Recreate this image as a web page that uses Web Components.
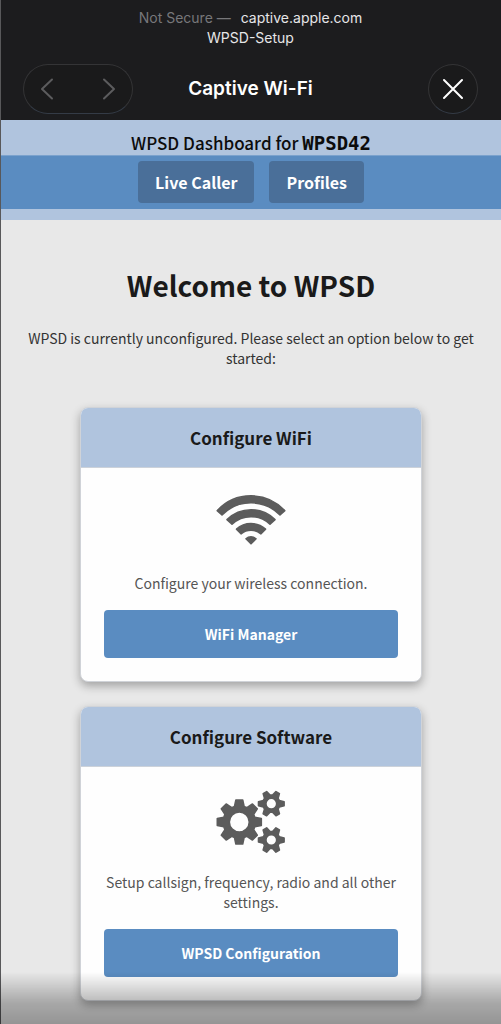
<!DOCTYPE html>
<html lang="en">
<head>
<meta charset="utf-8">
<meta name="viewport" content="width=device-width, initial-scale=1">
<title>Captive Wi-Fi</title>
<style>
    body {
        margin: 0;
        background: #e8e8e8;
        font-family: "Noto Sans CJK SC", "Noto Sans", sans-serif;
    }
</style>
</head>
<body>
<wpsd-app></wpsd-app>

<script>
// Outline of a cog with `teeth` teeth and a round hole in the middle
function gearPath(cx, cy, outer, inner, hole, teeth, tip, base) {
    const points = [];
    for (let i = 0; i < teeth; i++) {
        const angle = (i / teeth) * Math.PI * 2;
        [[inner, -base], [outer, -tip], [outer, tip], [inner, base]].forEach(([r, half]) => {
            const x = cx + r * Math.cos(angle) - half * Math.sin(angle);
            const y = cy + r * Math.sin(angle) + half * Math.cos(angle);
            points.push(`${x.toFixed(2)} ${y.toFixed(2)}`);
        });
    }
    return `M${points.join('L')}Z` +
        `M${cx - hole} ${cy}a${hole} ${hole} 0 1 0 ${hole * 2} 0a${hole} ${hole} 0 1 0 ${-hole * 2} 0Z`;
}

const ICONS = {
    wifi: `
        <svg viewBox="-36 -1 72 58" width="72" height="58" aria-hidden="true">
            <path d="M-33.8 15.7A46 46 0 0 1 33.8 15.7L29 20A40.500 40.500 0 0 0 -29 20Z"/>
            <path d="M-24 24.6A34 34 0 0 1 24 24.6L19 29.2A27.500 27.500 0 0 0 -19 29.2Z"/>
            <path d="M-14.500 34.2A21.500 21.500 0 0 1 14.500 34.2L10 38.8A15.500 15.500 0 0 0 -10 38.8Z"/>
            <path d="M-5 43.8A7.500 7.500 0 0 1 5 43.8L0 48.8Z"/>
        </svg>`,
    cogs: `
        <svg viewBox="0 0 72 64" width="72" height="64" aria-hidden="true">
            <path d="${gearPath(24.3, 32, 22, 15.5, 10, 8, 3.4, 4.8)}"/>
            <path d="${gearPath(56.3, 13.7, 12.8, 8, 5.4, 6, 2, 3.2)}"/>
            <path d="${gearPath(56.3, 50, 12.8, 8, 5.4, 6, 2, 3.2)}"/>
        </svg>`
};

class CaptiveBar extends HTMLElement {
    constructor() {
        super();
        this.attachShadow({ mode: 'open' });
    }

    connectedCallback() {
        this.shadowRoot.innerHTML = `
            <style>
                :host {
                    display: block;
                    box-sizing: border-box;
                    padding: 8px 23px 6px 22px;
                    background: #1c1c1e;
                    color: #e6e6e8;
                    font-family: Inter, "Liberation Sans", sans-serif;
                }
                .address {
                    font-size: 14px;
                    line-height: 20px;
                    text-align: center;
                }
                .address span {
                    margin-right: 6px;
                    color: #77777a;
                }
                .bar {
                    display: grid;
                    grid-template-columns: 1fr auto 1fr;
                    align-items: center;
                    margin-top: 16px;
                }
                h1 {
                    margin: 0;
                    font-size: 19px;
                    font-weight: 600;
                    line-height: 24px;
                    color: #fff;
                }
                button {
                    display: flex;
                    align-items: center;
                    justify-content: center;
                    padding: 0;
                    border: 0;
                    background: none;
                    color: #5c5c5e;
                }
                .nav, .close {
                    box-sizing: border-box;
                    height: 50px;
                    border: 1px solid #343436;
                    border-bottom-color: #343b46;
                    border-radius: 25px;
                    background: #1a1a1b;
                }
                .nav {
                    display: flex;
                    align-items: center;
                    justify-content: space-between;
                    justify-self: start;
                    width: 110px;
                    padding: 0 11px;
                }
                .nav button {
                    width: 24px;
                    height: 32px;
                }
                .close {
                    justify-self: end;
                    width: 50px;
                    color: #fff;
                }
                svg {
                    fill: none;
                    stroke: currentColor;
                    stroke-width: 2;
                    stroke-linecap: round;
                    stroke-linejoin: round;
                }
            </style>
            <div class="address"><span>Not Secure —</span> captive.apple.com</div>
            <div class="address">WPSD-Setup</div>
            <div class="bar">
                <div class="nav">
                    <button type="button" aria-label="Back">
                        <svg width="14" height="22" viewBox="0 0 14 22"><path d="M12 1.5L2 11l10 9.500"/></svg>
                    </button>
                    <button type="button" aria-label="Forward">
                        <svg width="14" height="22" viewBox="0 0 14 22"><path d="M2 1.500L12 11L2 20.500"/></svg>
                    </button>
                </div>
                <h1><slot></slot></h1>
                <button class="close" type="button" aria-label="Close">
                    <svg width="22" height="22" viewBox="0 0 22 22"><path d="M2 2l18 18M20 2L2 20"/></svg>
                </button>
            </div>
        `;
    }
}

class WpsdHeader extends HTMLElement {
    constructor() {
        super();
        this.attachShadow({ mode: 'open' });
    }

    connectedCallback() {
        this.shadowRoot.innerHTML = `
            <style>
                :host {
                    display: block;
                    padding-bottom: 11px;
                    background: #b0c4de;
                    color: #0c0c0c;
                }
                .title {
                    padding: 11px 8px 0;
                    font-size: 17px;
                    font-weight: 500;
                    line-height: 24px;
                    text-align: center;
                }
                .title b {
                    font-family: "DejaVu Sans Mono", monospace;
                    font-size: 19px;
                    line-height: 1;
                }
                nav {
                    display: flex;
                    justify-content: center;
                    gap: 15px;
                    padding: 5px 8px 6px;
                    background: #5a8cc1;
                    border-top: 1px solid #7ba2cd;
                }
            </style>
            <div class="title">WPSD Dashboard for <b>${this.getAttribute('host')}</b></div>
            <nav><slot></slot></nav>
        `;
    }
}

class NavLink extends HTMLElement {
    constructor() {
        super();
        this.attachShadow({ mode: 'open' });
    }

    connectedCallback() {
        this.shadowRoot.innerHTML = `
            <style>
                :host {
                    display: block;
                }
                a {
                    display: block;
                    padding: 9px 17px;
                    border-radius: 4px;
                    background: #4a6f99;
                    color: #fff;
                    font-size: 16px;
                    font-weight: 700;
                    line-height: 24px;
                    text-decoration: none;
                }
            </style>
            <a href="#"><slot></slot></a>
        `;
    }
}

class SetupCard extends HTMLElement {
    constructor() {
        super();
        this.attachShadow({ mode: 'open' });
    }

    connectedCallback() {
        this.shadowRoot.innerHTML = `
            <style>
                :host {
                    display: block;
                    box-sizing: border-box;
                    overflow: hidden;
                    border: 1px solid #d0d3d8;
                    border-radius: 8px;
                    background: #fefefe;
                    box-shadow: 0 4px 10px rgba(0, 0, 0, 0.3);
                    text-align: center;
                }
                h2 {
                    margin: 0;
                    padding: 16px 24px;
                    border-bottom: 1px solid #ccd2da;
                    background: #b0c4de;
                    color: #1a1a1a;
                    font-size: 17px;
                    font-weight: 700;
                    line-height: 27px;
                }
                .body {
                    padding: 23px;
                }
                .icon {
                    display: flex;
                    align-items: center;
                    justify-content: center;
                    height: 64px;
                }
                svg {
                    fill: #5c5c5c;
                    stroke: #5c5c5c;
                    stroke-width: 1.6;
                    stroke-linejoin: round;
                }
                p {
                    margin: 18px 0 17px;
                    color: #555;
                    font-size: 14px;
                    line-height: 20px;
                }
                a {
                    display: block;
                    padding: 12px;
                    border-radius: 4px;
                    background: #5a8cc1;
                    color: #fff;
                    font-size: 14px;
                    font-weight: 700;
                    line-height: 24px;
                    text-decoration: none;
                }
            </style>
            <h2>${this.getAttribute('heading')}</h2>
            <div class="body">
                <div class="icon">${ICONS[this.getAttribute('icon')]}</div>
                <p><slot></slot></p>
                <a href="#">${this.getAttribute('action')}</a>
            </div>
        `;
    }
}

class WpsdApp extends HTMLElement {
    constructor() {
        super();
        this.attachShadow({ mode: 'open' });
    }

    connectedCallback() {
        this.shadowRoot.innerHTML = `
            <style>
                :host {
                    display: block;
                    box-sizing: border-box;
                    min-height: 100vh;
                    border-left: 1px solid #58585a;
                }
                main {
                    padding: 43px 20px 21px;
                    text-align: center;
                }
                h1 {
                    margin: 0;
                    color: #1a1a1a;
                    font-size: 28px;
                    font-weight: 700;
                    line-height: 44px;
                }
                .intro {
                    margin: 21px 0 39px;
                    color: #333;
                    font-size: 14px;
                    line-height: 20px;
                }
                .cards {
                    display: grid;
                    gap: 24px;
                    max-width: 342px;
                    margin: 0 auto;
                }
                /* toolbar shade over the end of the page */
                .shade {
                    position: fixed;
                    right: 0;
                    bottom: 0;
                    left: 0;
                    height: 52px;
                    background: linear-gradient(rgba(0, 0, 0, 0), rgba(0, 0, 0, 0.28) 60%, rgba(0, 0, 0, 0.36));
                    pointer-events: none;
                }
            </style>
            <captive-bar>Captive Wi-Fi</captive-bar>
            <wpsd-header host="WPSD42">
                <nav-link>Live Caller</nav-link>
                <nav-link>Profiles</nav-link>
            </wpsd-header>
            <main>
                <h1>Welcome to WPSD</h1>
                <p class="intro">WPSD is currently unconfigured. Please select an option below to get started:</p>
                <div class="cards">
                    <setup-card heading="Configure WiFi" icon="wifi" action="WiFi Manager">Configure your wireless connection.</setup-card>
                    <setup-card heading="Configure Software" icon="cogs" action="WPSD Configuration">Setup callsign, frequency, radio and all other settings.</setup-card>
                </div>
            </main>
            <div class="shade"></div>
        `;
    }
}

customElements.define('captive-bar', CaptiveBar);
customElements.define('nav-link', NavLink);
customElements.define('wpsd-header', WpsdHeader);
customElements.define('setup-card', SetupCard);
customElements.define('wpsd-app', WpsdApp);
</script>
</body>
</html>
